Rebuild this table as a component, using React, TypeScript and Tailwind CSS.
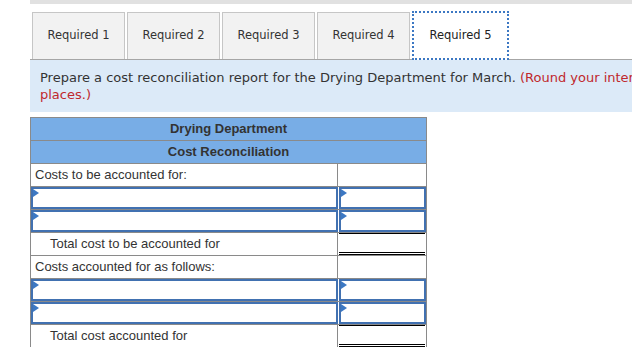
import React from 'react';

const tabs = ['Required 1', 'Required 2', 'Required 3', 'Required 4', 'Required 5'];

// small blue flag in the top-left corner of an entry cell
function Flag() {
    return (
        <svg className="absolute left-0 top-0" width="6" height="8" viewBox="0 0 6 8">
            <polygon points="0,0 6,4 0,8" fill="#3c78c3" />
        </svg>
    );
}

function InputCell({ className = '' }: { className?: string }) {
    return (
        <div className={`relative h-[22px] border-2 border-[#4171b1] bg-white ${className}`}>
            <Flag />
        </div>
    );
}

function LabelRow({ label, indent, total }: { label: string; indent?: boolean; total?: boolean }) {
    return (
        <div className="flex h-[23px] border-b border-[#8a8a8a]">
            <div
                className={`flex w-[307px] items-center border-r border-[#8a8a8a] text-[13px] text-[#333] ${indent ? 'pl-[19px]' : 'pl-[4px]'}`}
            >
                {label}
            </div>
            <div className="flex-1 px-px">
                {total && <div className="h-full border-t border-b-[3px] border-double border-black" />}
            </div>
        </div>
    );
}

function InputRow() {
    return (
        <div className="flex h-[23px] border-b border-[#8a8a8a]">
            <InputCell className="w-[307px] border-r-2" />
            <InputCell className="ml-px flex-1" />
        </div>
    );
}

export default function App() {
    return (
        <div className="h-[347px] w-[632px] overflow-hidden bg-white pl-[30px] font-['DejaVu_Sans',sans-serif]">
            <div className="h-[4px] bg-[#e1e1e1]" />

            {/* Tab strip */}
            <div className="mt-[7px] flex items-end border-b border-[#a6a6a6] pl-[2px]">
                {tabs.map((t, i) =>
                    i === 4 ? (
                        <div
                            key={t}
                            className="-mb-px flex h-[49px] w-[97px] items-center justify-center border-2 border-dotted border-[#3c78c3] bg-white text-[11.5px] text-[#222]"
                        >
                            {t}
                        </div>
                    ) : (
                        <div
                            key={t}
                            className="mr-[2px] flex h-[47px] w-[93px] items-center justify-center border border-b-0 border-[#c6c6c6] bg-[#f2f2f2] text-[11.5px] text-[#333]"
                        >
                            {t}
                        </div>
                    )
                )}
            </div>

            {/* Instructions */}
            <div className="h-[52px] overflow-hidden whitespace-nowrap bg-[#dceaf8] pl-[10px] pt-[9px] text-[13px] leading-[17px] text-[#333]">
                Prepare a cost reconciliation report for the Drying Department for March.{' '}
                <span className="text-[#c0282d]">(Round your intermediate calculations to 2 decimal</span>
                <br />
                <span className="text-[#c0282d]">places.)</span>
            </div>

            {/* Cost reconciliation table */}
            <div className="mt-[5px] w-[397px] border-l border-r border-t border-[#8a8a8a] font-['Liberation_Sans',Arial,sans-serif]">
                <div className="flex h-[23px] items-center justify-center border-b border-[#8a8a8a] bg-[#78ade6] text-[13px] font-bold text-[#333]">
                    Drying Department
                </div>
                <div className="flex h-[23px] items-center justify-center border-b border-[#8a8a8a] bg-[#78ade6] text-[13px] font-bold text-[#333]">
                    Cost Reconciliation
                </div>
                <LabelRow label="Costs to be accounted for:" />
                <InputRow />
                <InputRow />
                <LabelRow label="Total cost to be accounted for" indent total />
                <LabelRow label="Costs accounted for as follows:" />
                <InputRow />
                <InputRow />
                <LabelRow label="Total cost accounted for" indent total />
            </div>
        </div>
    );
}
